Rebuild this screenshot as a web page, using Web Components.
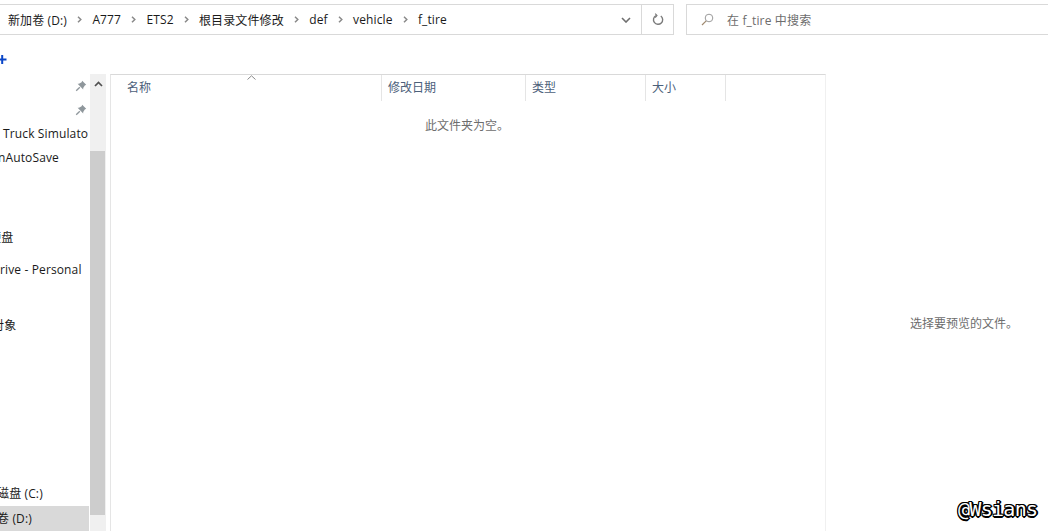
<!DOCTYPE html>
<html lang="zh">
<head>
<meta charset="utf-8">
<title>f_tire</title>
<style>
html,body{margin:0;height:100%;overflow:hidden;background:#fff}
body{font:12px "Open Sans","Noto Sans CJK SC",sans-serif;color:#1a1a1a}
</style>
</head>
<body>
<explorer-window>
  <address-row slot="top" path="新加卷 (D:)|A777|ETS2|根目录文件修改|def|vehicle|f_tire" search="在 f_tire 中搜索"></address-row>
  <nav-pane slot="nav"></nav-pane>
  <file-list slot="list"></file-list>
  <preview-pane slot="preview"></preview-pane>
</explorer-window>
<wm-tag>@Wsians</wm-tag>
<script>
/* ============ shell: top row, plus strip, then the three panes ============ */
class ExplorerWindow extends HTMLElement {
  connectedCallback() {
    if (this._built) return;
    this._built = true;
    const root = this.attachShadow({ mode: 'open' });
    root.innerHTML = `<style>
:host{display:flex;flex-direction:column;height:531px;overflow:hidden}
.plus{height:39px;flex:none;display:flex;align-items:flex-end;padding-bottom:10px;box-sizing:border-box}
.plus svg{display:block}
.panes{flex:1;min-height:0;display:grid;grid-template-columns:110px 716px 1fr}
</style>
<slot name="top"></slot>
<div class="plus"><svg width="7" height="9" viewBox="0 0 7 9"><path d="M0 3.5h6.5v2H0zM1.2 0h2v9h-2z" fill="#0a46c8"/></svg></div>
<div class="panes"><slot name="nav"></slot><slot name="list"></slot><slot name="preview"></slot></div>`;
  }
}
customElements.define('explorer-window', ExplorerWindow);

class AddressRow extends HTMLElement {
  connectedCallback() {
    if (this.shadowRoot) return;
    const root = this.attachShadow({ mode: 'open' });
    const parts = this.getAttribute('path').split('|');
    const chev = '<svg class="chev" width="5" height="7" viewBox="0 0 5 7"><path d="M1 .8 3.8 3.5 1 6.2" fill="none" stroke="#8a8a8a" stroke-width="1.5"/></svg>';
    root.innerHTML = `<style>
:host{display:flex;margin:4px 0 0 -2px;height:31px;flex:none;gap:12px;font-size:12px;color:#1a1a1a}
.addr,.search{box-sizing:border-box;height:31px;border:1px solid #d9d9d9;display:flex;align-items:center;background:#fff}
.addr{width:676px;border-left:0;flex:none}
.crumbs{flex:1;display:flex;align-items:center;gap:10.2px;padding-left:10px;white-space:nowrap;letter-spacing:.12px}
.chev{flex:none}
.drop{width:36px;height:100%;display:flex;align-items:center;justify-content:center;padding-left:6px;box-sizing:border-box}
.refresh{width:31px;height:100%;border-left:1px solid #d9d9d9;display:flex;align-items:center;justify-content:center}
.search{flex:1;border-right:0;padding-left:14px;gap:13px;color:#6d6d6d;letter-spacing:.15px}
</style>
<div class="addr">
  <div class="crumbs">${parts.map(p => '<span>' + p + '</span>').join(chev)}</div>
  <div class="drop"><svg width="10" height="6" viewBox="0 0 10 6"><path d="M1 1 5 5 9 1" fill="none" stroke="#6f6f6f" stroke-width="1.6"/></svg></div>
  <div class="refresh"><svg width="12" height="13" viewBox="0 0 12 13"><path d="M4 2.6A4.6 4.6 0 1 0 8.8 3" fill="none" stroke="#7a7a7a" stroke-width="1.4"/><path d="M3.2.6 5 2.6 3.2 4.6" fill="none" stroke="#7a7a7a" stroke-width="1.1"/></svg></div>
</div>
<div class="search"><svg width="13" height="13" viewBox="0 0 13 13"><circle cx="8" cy="5" r="3.8" fill="none" stroke="#9a9a9a"/><path d="M5.2 7.8 1 12" stroke="#a08a70" stroke-width="1.2"/></svg><span>${this.getAttribute('search')}</span></div>`;
  }
}
customElements.define('address-row', AddressRow);

class NavPane extends HTMLElement {
  connectedCallback() {
    if (this.shadowRoot) return;
    const root = this.attachShadow({ mode: 'open' });
    const pin = '<svg width="12" height="12" viewBox="0 0 12 12"><path d="M7.2 .8 11.2 4.8 9.8 5.4 8.2 8 8.2 9.4 2.6 3.8 4 3.8 6.6 2.2z" fill="#8f979c"/><path d="M4.8 7.2 1.2 10.8" stroke="#8f979c" stroke-width="1.3"/></svg>';
    root.innerHTML = `<style>
:host{display:grid;grid-template-columns:90px 16px 4px;min-height:0;overflow:hidden}
.list{overflow:hidden;height:100%;box-sizing:border-box;display:flex;flex-direction:column;letter-spacing:.13px}
.row{height:24px;line-height:24px;white-space:nowrap;flex:none;padding-left:3px;color:#1a1a1a}
.pin{display:flex;justify-content:flex-end;align-items:center;padding-right:3px;box-sizing:border-box}
.cjk{padding-left:0}
.spacer{flex:1}
.sel{background:#d9d9d9;height:25px;line-height:25px;margin-right:1px}
.bar{background:#f0f0f0;display:flex;flex-direction:column}
.up{height:77px;flex:none;display:flex;justify-content:center;padding-top:7px;box-sizing:border-box}
.thumb{height:364px;flex:none;background:#cdcdcd;margin-right:1px}
</style>
<div class="list">
  <div class="row pin">${pin}</div>
  <div class="row pin">${pin}</div>
  <div class="row">Truck Simulato</div>
  <div class="row" style="padding-left:0;margin-left:-2px">nAutoSave</div>
  <div style="height:56px;flex:none"></div>
  <div class="row cjk" style="margin-left:-11px">硬盘</div>
  <div style="height:8px;flex:none"></div>
  <div class="row" style="padding-left:0">rive - Personal</div>
  <div style="height:32px;flex:none"></div>
  <div class="row cjk" style="margin-left:-8px">对象</div>
  <div class="spacer"></div>
  <div class="row cjk" style="margin-left:-3px">磁盘 (C:)</div>
  <div class="row cjk sel"><span style="margin-left:-3px">卷 (D:)</span></div>
</div>
<div class="bar">
  <div class="up"><svg width="9" height="6" viewBox="0 0 9 6"><path d="M1 5 4.5 1.5 8 5" fill="none" stroke="#505050" stroke-width="1.7"/></svg></div>
  <div class="thumb"></div>
</div>
<div></div>`;
  }
}
customElements.define('nav-pane', NavPane);

class FileList extends HTMLElement {
  connectedCallback() {
    if (this.shadowRoot) return;
    const root = this.attachShadow({ mode: 'open' });
    root.innerHTML = `<style>
:host{display:flex;flex-direction:column;position:relative;border-left:1px solid #e5e5e5;border-right:1px solid #f0f0f0;border-top:1px solid #d9d9d9;box-sizing:border-box;min-height:0}
.head{display:grid;grid-template-columns:271px 144px 120px 80px;height:27px;flex:none;margin-right:99px}
.head div{border-right:1px solid #e5e5e5;color:#4c607a;padding-left:6px;line-height:25px;height:26px;white-space:nowrap;box-sizing:border-box}
.head div:first-child{padding-left:16px}
.sort{position:absolute;left:136px;top:0}
.empty{text-align:center;margin-top:14px;width:712px;color:#6d6d6d}
</style>
<div class="head"><div>名称</div><div>修改日期</div><div>类型</div><div>大小</div></div>
<svg class="sort" width="9" height="5" viewBox="0 0 9 5"><path d="M.5 4.5 4.5 .8 8.5 4.5" fill="none" stroke="#8a8a8a"/></svg>
<div class="empty">此文件夹为空。</div>`;
  }
}
customElements.define('file-list', FileList);

class PreviewPane extends HTMLElement {
  connectedCallback() {
    if (this.shadowRoot) return;
    const root = this.attachShadow({ mode: 'open' });
    root.innerHTML = `<style>
:host{display:flex;align-items:center;justify-content:center;color:#6d6d6d;padding:41px 0 0 54px;box-sizing:border-box;min-height:0}
</style><span>选择要预览的文件。</span>`;
  }
}
customElements.define('preview-pane', PreviewPane);

/* watermark baked into the screenshot, sits over the corner */
class WmTag extends HTMLElement {
  connectedCallback() {
    if (this.shadowRoot) return;
    const root = this.attachShadow({ mode: 'open' });
    root.innerHTML = `<style>
:host{position:absolute;left:958px;top:497px;font:400 20px/24px "DejaVu Sans Mono",monospace;letter-spacing:-.7px;color:#fff;
text-shadow:1px 0 #000,-1px 0 #000,0 1px #000,0 -1px #000,1px 1px #000,-1px -1px #000,1px -1px #000,-1px 1px #000,2px 0 #000,0 2px #000}
</style><slot></slot>`;
  }
}
customElements.define('wm-tag', WmTag);
</script>
</body>
</html>
